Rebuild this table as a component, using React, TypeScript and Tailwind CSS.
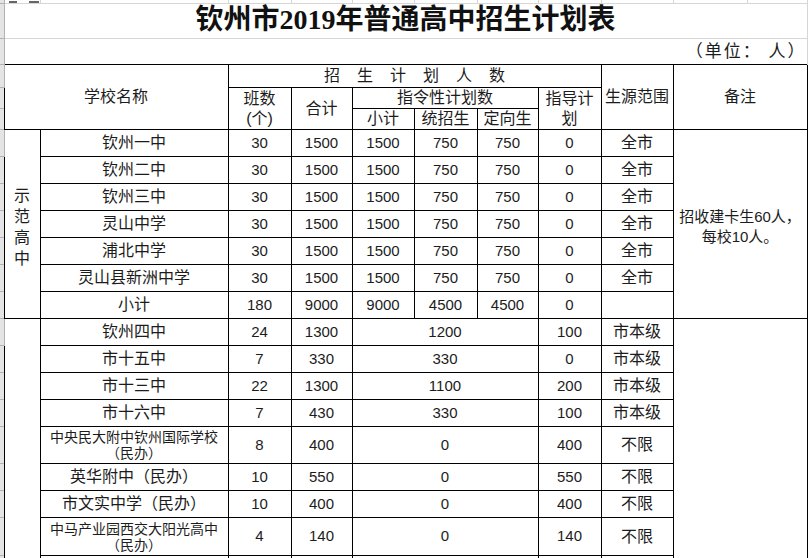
import React from 'react';

type Row = {
  name: string | string[];
  cls: string;
  total: string;
  sub?: string;
  tz?: string;
  dx?: string;
  merged?: string;
  guide: string;
  src: string;
  h: string;
};

const demo: Row[] = [
  { name: '钦州一中', cls: '30', total: '1500', sub: '1500', tz: '750', dx: '750', guide: '0', src: '全市', h: 'h-[27px]' },
  { name: '钦州二中', cls: '30', total: '1500', sub: '1500', tz: '750', dx: '750', guide: '0', src: '全市', h: 'h-[27px]' },
  { name: '钦州三中', cls: '30', total: '1500', sub: '1500', tz: '750', dx: '750', guide: '0', src: '全市', h: 'h-[27px]' },
  { name: '灵山中学', cls: '30', total: '1500', sub: '1500', tz: '750', dx: '750', guide: '0', src: '全市', h: 'h-[27px]' },
  { name: '浦北中学', cls: '30', total: '1500', sub: '1500', tz: '750', dx: '750', guide: '0', src: '全市', h: 'h-[27px]' },
  { name: '灵山县新洲中学', cls: '30', total: '1500', sub: '1500', tz: '750', dx: '750', guide: '0', src: '全市', h: 'h-[27px]' },
  { name: '小计', cls: '180', total: '9000', sub: '9000', tz: '4500', dx: '4500', guide: '0', src: '', h: 'h-[27px]' },
];

const general: Row[] = [
  { name: '钦州四中', cls: '24', total: '1300', merged: '1200', guide: '100', src: '市本级', h: 'h-[27px]' },
  { name: '市十五中', cls: '7', total: '330', merged: '330', guide: '0', src: '市本级', h: 'h-[27px]' },
  { name: '市十三中', cls: '22', total: '1300', merged: '1100', guide: '200', src: '市本级', h: 'h-[27px]' },
  { name: '市十六中', cls: '7', total: '430', merged: '330', guide: '100', src: '市本级', h: 'h-[27px]' },
  { name: ['中央民大附中钦州国际学校', '（民办）'], cls: '8', total: '400', merged: '0', guide: '400', src: '不限', h: 'h-[37px]' },
  { name: '英华附中（民办）', cls: '10', total: '550', merged: '0', guide: '550', src: '不限', h: 'h-[27px]' },
  { name: '市文实中学（民办）', cls: '10', total: '400', merged: '0', guide: '400', src: '不限', h: 'h-[27px]' },
  { name: ['中马产业园西交大阳光高中', '（民办）'], cls: '4', total: '140', merged: '0', guide: '140', src: '不限', h: 'h-[38px]' },
  { name: '', cls: '', total: '', merged: '', guide: '', src: '', h: 'h-[27px]' },
];

const cell = 'border border-black p-0 text-center align-middle';
const num = `${cell} text-[15px]`;
const gutter = 'w-[4px] p-0 bg-[#e4e4e4] border-r border-b border-[#b2b2b2]';
const grid = 'border-r border-b border-[#d6d6d6] p-0';

function Name({ name }: { name: string | string[] }) {
  if (Array.isArray(name)) {
    return (
      <div className="text-[14px] leading-[16px]">
        {name.map((n) => (
          <div key={n}>{n}</div>
        ))}
      </div>
    );
  }
  return <span className="text-[16px]">{name}</span>;
}

export default function App() {
  return (
    <div className="w-[811px] h-[558px] overflow-hidden bg-white text-[#1c1c1c] font-['Liberation_Sans','Noto_Sans_CJK_SC',sans-serif]">
      <table className="table-fixed border-collapse w-[807px]">
        <colgroup>
          <col className="w-[4px]" />
          <col className="w-[36px]" />
          <col className="w-[188px]" />
          <col className="w-[63px]" />
          <col className="w-[61px]" />
          <col className="w-[62px]" />
          <col className="w-[63px]" />
          <col className="w-[61px]" />
          <col className="w-[63px]" />
          <col className="w-[72px]" />
          <col className="w-[134px]" />
        </colgroup>
        <tbody>
          {/* cut-off sheet row */}
          <tr className="h-[3px] text-[0px] leading-none">
            <td className={gutter} />
            <td className={grid}>
              <div className="flex gap-[12px] pl-[4px]">
                <div className="h-[2px] w-[8px] bg-[#666]" />
                <div className="h-[2px] w-[10px] bg-[#666]" />
              </div>
            </td>
            <td className={grid} />
            <td className={grid} />
            <td className={grid} />
            <td className={grid} />
            <td className={grid} />
            <td className={grid} />
            <td className={grid} />
            <td className={grid} />
            <td className={grid}>
              <div className="h-[3px] w-[74px] border-r border-[#d6d6d6]" />
            </td>
          </tr>

          {/* title */}
          <tr className="h-[35px]">
            <td className={gutter} />
            <td colSpan={10} className="border-r border-b border-[#d6d6d6] p-0 text-center align-middle">
              <span className="text-[28px] font-bold leading-none text-[#111] font-['Liberation_Serif','Noto_Sans_CJK_SC',serif]">
                钦州市2019年普通高中招生计划表
              </span>
            </td>
          </tr>

          {/* unit */}
          <tr className="h-[26px]">
            <td className={gutter} />
            <td colSpan={10} className="border-r border-[#d6d6d6] p-0 text-right align-bottom">
              <span className="text-[17px] leading-[18px] tracking-[2px]">（单位： 人）</span>
            </td>
          </tr>

          {/* header */}
          <tr className="h-[23px] text-[16px] leading-[20px]">
            <td className={gutter} />
            <td colSpan={2} rowSpan={3} className={cell}>学校名称</td>
            <td colSpan={6} className={cell}>
              <span className="tracking-[17px] pl-[17px]">招生计划人数</span>
            </td>
            <td rowSpan={3} className={cell}>生源范围</td>
            <td rowSpan={3} className={cell}>备注</td>
          </tr>
          <tr className="h-[21px] text-[16px] leading-[20px]">
            <td className={gutter} />
            <td rowSpan={2} className={cell}>
              班数<br />(个)
            </td>
            <td rowSpan={2} className={cell}>合计</td>
            <td colSpan={3} className={cell}>指令性计划数</td>
            <td rowSpan={2} className={cell}>
              指导计<br />划
            </td>
          </tr>
          <tr className="h-[21px] text-[16px] leading-[20px]">
            <td className={gutter} />
            <td className={cell}>小计</td>
            <td className={cell}>统招生</td>
            <td className={cell}>定向生</td>
          </tr>

          {/* 示范高中 */}
          {demo.map((r, i) => (
            <tr key={`d${i}`} className={r.h}>
              <td className={gutter} />
              {i === 0 && (
                <td rowSpan={demo.length} className={cell}>
                  <div className="flex flex-col items-center text-[16px] leading-[21px] pt-[6px]">
                    <span>示</span>
                    <span>范</span>
                    <span>高</span>
                    <span>中</span>
                  </div>
                </td>
              )}
              <td className={cell}>
                <Name name={r.name} />
              </td>
              <td className={num}>{r.cls}</td>
              <td className={num}>{r.total}</td>
              <td className={num}>{r.sub}</td>
              <td className={num}>{r.tz}</td>
              <td className={num}>{r.dx}</td>
              <td className={num}>{r.guide}</td>
              <td className={`${cell} text-[16px]`}>{r.src}</td>
              {i === 0 && (
                <td rowSpan={demo.length} className={`${cell} text-[15px] leading-[20px]`}>
                  <div className="pt-[6px]">
                    招收建卡生60人，
                    <br />
                    每校10人。
                  </div>
                </td>
              )}
            </tr>
          ))}

          {/* 普通高中 */}
          {general.map((r, i) => (
            <tr key={`g${i}`} className={r.h}>
              <td className={gutter} />
              {i === 0 && <td rowSpan={general.length} className={cell} />}
              <td className={cell}>
                <Name name={r.name} />
              </td>
              <td className={num}>{r.cls}</td>
              <td className={num}>{r.total}</td>
              <td colSpan={3} className={num}>{r.merged}</td>
              <td className={num}>{r.guide}</td>
              <td className={`${cell} text-[16px]`}>{r.src}</td>
              {i === 0 && <td rowSpan={general.length} className={cell} />}
            </tr>
          ))}
        </tbody>
      </table>
    </div>
  );
}
